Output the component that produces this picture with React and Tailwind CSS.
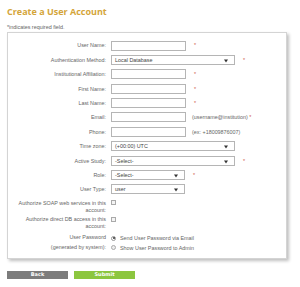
import React from "react";

const Star = () => <span className="text-[#d0574a]">*</span>;

const Arrow = () => (
  <svg width="4" height="4" viewBox="0 0 4 4" className="absolute right-[6px] top-[3px]">
    <path d="M0 0.5h4L2 3.5z" fill="#333" />
  </svg>
);

const Text = ({ w = "w-[75px]" }) => (
  <div className={`${w} h-[10px] border border-[#b5b5b5] bg-white`} />
);

const Select = ({ w = "w-[124px]", value }) => (
  <div className={`${w} h-[10px] border border-[#b5b5b5] bg-white relative pl-[3px] leading-[8px] text-[#444]`}>
    {value}
    <Arrow />
  </div>
);

const Row = ({ label, children }) => (
  <div className="flex items-center h-[10px]">
    <div className="w-[103px] pr-[5px] text-right shrink-0">{label}</div>
    <div className="flex items-center">{children}</div>
  </div>
);

export default function App() {
  const labelRows = [
    ["User Name:", <><Text /><span className="ml-[8px]"><Star /></span></>],
    ["Authentication Method:", <><Select value="Local Database" /><span className="ml-[8px]"><Star /></span></>],
    ["Institutional Affiliation:", <><Text /><span className="ml-[8px]"><Star /></span></>],
    ["First Name:", <><Text /><span className="ml-[8px]"><Star /></span></>],
    ["Last Name:", <><Text /><span className="ml-[8px]"><Star /></span></>],
    ["Email:", <><Text /><span className="ml-[6px]">(username@institution) <Star /></span></>],
    ["Phone:", <><Text /><span className="ml-[6px]">(ex: +18009876007)</span></>],
    ["Time zone:", <Select value="(+00:00) UTC" />],
    ["Active Study:", <><Select value="-Select-" /><span className="ml-[8px]"><Star /></span></>],
    ["Role:", <><Select w="w-[74px]" value="-Select-" /><span className="ml-[8px]"><Star /></span></>],
    ["User Type:", <Select w="w-[74px]" value="user" />],
  ];

  return (
    <div className="w-[300px] h-[287px] bg-white pl-[7px] pt-[6px] text-[#666] text-[5.4px] font-['Liberation_Sans',sans-serif]">
      <h1 className="text-[9px] font-bold text-[#d4a53a] leading-[12px] font-['Open_Sans',sans-serif]">
        Create a User Account
      </h1>
      <p className="mt-[6px] leading-[6px]">*indicates required field.</p>
      <div className="mt-[1.5px] w-[280px] border border-[#d4d4d4] shadow-[2px_2px_3px_rgba(0,0,0,0.25)] pt-[8px] pb-[6px]">
        <div className="flex flex-col gap-[4.4px]">
          {labelRows.map(([l, c]) => (
            <Row key={l} label={l}>{c}</Row>
          ))}
        </div>
        <div className="flex mt-[5.5px]">
          <div className="w-[103px] pr-[5px] text-right leading-[6.7px]">
            Authorize SOAP web services in this account:
          </div>
          <div className="w-[5px] h-[5px] border border-[#aaa] bg-[#f4f4f4] mt-[0.5px]" />
        </div>
        <div className="flex mt-[3px]">
          <div className="w-[103px] pr-[5px] text-right leading-[6.7px]">
            Authorize direct DB access in this account:
          </div>
          <div className="w-[5px] h-[5px] border border-[#aaa] bg-[#f4f4f4] mt-[0.5px]" />
        </div>
        <div className="flex mt-[3.5px]">
          <div className="w-[103px] pr-[5px] text-right leading-[9.6px]">
            User Password<br />(generated by system):
          </div>
          <div className="flex flex-col">
            <div className="flex items-center h-[9.6px]">
              <span className="w-[5px] h-[5px] rounded-full border border-[#999] bg-white flex items-center justify-center">
                <span className="w-[2px] h-[2px] rounded-full bg-[#333]" />
              </span>
              <span className="ml-[4px]">Send User Password via Email</span>
            </div>
            <div className="flex items-center h-[9.6px]">
              <span className="w-[5px] h-[5px] rounded-full border border-[#aaa] bg-[#eee]" />
              <span className="ml-[4px]">Show User Password to Admin</span>
            </div>
          </div>
        </div>
      </div>
      <div className="flex gap-[6px] mt-[12px]">
        <button className="w-[61px] h-[7.5px] bg-[#7c7c7c] text-white text-[5px] font-bold leading-[7.5px] font-['DejaVu_Sans',sans-serif]">Back</button>
        <button className="w-[61px] h-[7.5px] bg-[#8cc63f] text-white text-[5px] font-bold leading-[7.5px] font-['DejaVu_Sans',sans-serif]">Submit</button>
      </div>
    </div>
  );
}
